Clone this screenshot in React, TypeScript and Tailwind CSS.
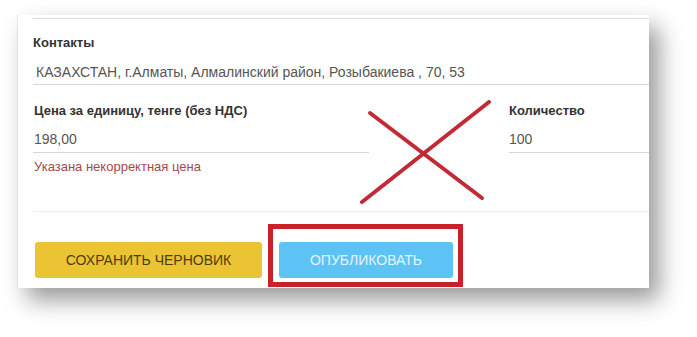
import React from 'react';

export default function App() {
  return (
    <div
      className="relative w-[697px] h-[337px] bg-white overflow-hidden"
      style={{ fontFamily: '"Liberation Sans", Arial, sans-serif' }}
    >
      <div className="ml-[17px] mt-[15px] w-[632px] h-[273px] bg-white border-l border-[#e2e2e2] shadow-[10px_12px_22px_rgba(0,0,0,0.4)] pl-[15px]">
        <div className="h-[3px]" />
        <div className="border-t border-[#dcdcdc]" />

        <div className="pt-[16px] text-[13px] leading-[16px] font-bold text-[#333]">Контакты</div>
        <div className="mt-[11px] pl-[3px] pb-[2px] border-b border-[#d6d6d6] text-[14px] leading-[20px] text-[#555]">
          КАЗАХСТАН, г.Алматы, Алмалинский район, Розыбакиева , 70, 53
        </div>

        <div className="mt-[18px] flex gap-[140px]">
          <div className="w-[336px]">
            <div className="pl-[1px] text-[13px] leading-[16px] font-bold text-[#333]">Цена за единицу, тенге (без НДС)</div>
            <div className="mt-[10px] pl-[1px] pb-[3px] border-b border-[#d6d6d6] text-[14px] leading-[20px] text-[#555]">198,00</div>
            <div className="mt-[6px] pl-[1px] text-[13px] leading-[16px] text-[#a24a4c]">Указана некорректная цена</div>
          </div>
          <div className="flex-1">
            <div className="text-[13px] leading-[16px] font-bold text-[#333]">Количество</div>
            <div className="mt-[10px] pb-[3px] border-b border-[#d6d6d6] text-[14px] leading-[20px] text-[#555]">100</div>
          </div>
        </div>

        <div className="mt-[36px] border-t border-[#ececec]" />

        <div className="mt-[12px] flex items-start">
          <button className="mt-[18px] ml-[2px] w-[227px] h-[36px] rounded-[3px] bg-[#ebc433] text-[14px] text-[#4d3c12] uppercase">
            Сохранить черновик
          </button>
          <div className="ml-[6px] border-[5px] border-[#c9202c] pt-[13px] pb-[4px] pl-[6px] pr-[5px]">
            <button className="w-[174px] h-[36px] rounded-[3px] bg-[#5cc3f4] text-[14px] text-[#e4f5ff] uppercase">
              Опубликовать
            </button>
          </div>
        </div>
      </div>

      <svg className="absolute left-[360px] top-[100px]" width="132" height="104" viewBox="0 0 132 104">
        <line x1="10" y1="13" x2="122" y2="98" stroke="#c22a36" strokeWidth="4" strokeLinecap="round" />
        <line x1="129" y1="2" x2="2" y2="102" stroke="#c22a36" strokeWidth="4" strokeLinecap="round" />
      </svg>
    </div>
  );
}
